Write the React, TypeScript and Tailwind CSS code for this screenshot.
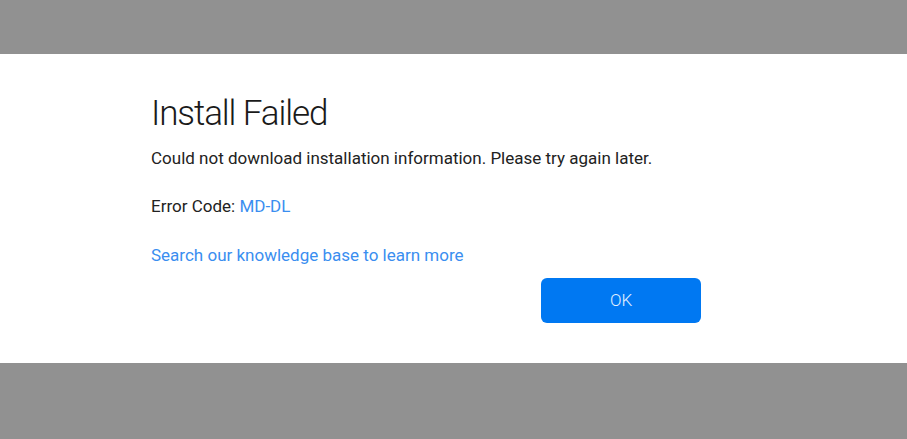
import React from 'react';

const App: React.FC = () => {
    return (
        <div className="w-[907px] h-[439px] bg-[#919191] flex flex-col" style={{ fontFamily: 'Roboto, "Liberation Sans", sans-serif' }}>
            <div className="mt-[54px] h-[309px] bg-white">
                <div className="ml-[151px] w-[550px] pt-[40px] flex flex-col">
                    <h1 className="text-[35px] leading-[40px] font-light tracking-[-1.1px] text-[#1a1a1a]">Install Failed</h1>
                    <p className="mt-[12px] text-[17px] leading-[24px] text-[#222]">
                        Could not download installation information. Please try again later.
                    </p>
                    <p className="mt-[24px] text-[17px] leading-[24px] text-[#222]">
                        Error Code: <span className="text-[#3a8ef0]">MD-DL</span>
                    </p>
                    <a className="mt-[25px] text-[17px] leading-[24px] text-[#3a8ef0] cursor-pointer">
                        Search our knowledge base to learn more
                    </a>
                    <div className="mt-[11px] flex justify-end">
                        <button className="w-[160px] h-[45px] rounded-[6px] bg-[#0078f2] text-white/90 font-light text-[17px]">
                            OK
                        </button>
                    </div>
                </div>
            </div>
        </div>
    );
};

export default App;
